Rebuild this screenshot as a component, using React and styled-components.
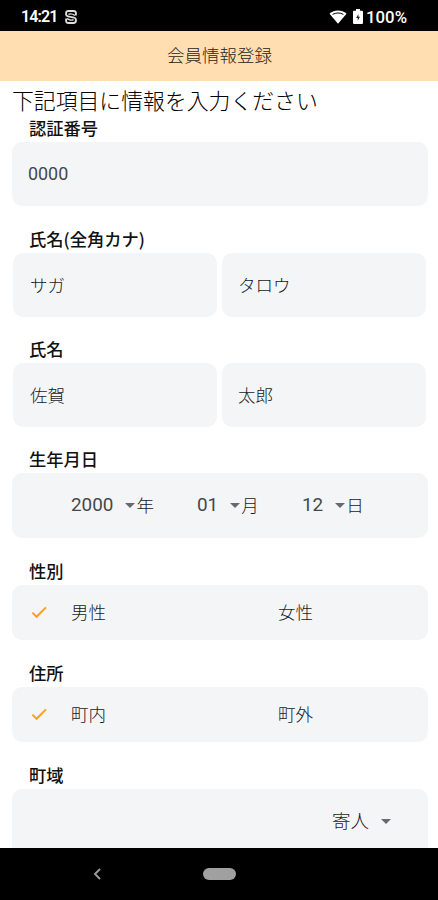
import React from "react";
import styled, { createGlobalStyle } from "styled-components";

const App = () => {
  return (
    <>
      <GlobalStyle />
      <StScreen>
        <StStatusBar>
          <StStatusGroup>
            <StClock>14:21</StClock>
            <AppMark />
          </StStatusGroup>
          <StStatusGroup>
            <WifiIcon />
            <BatteryIcon />
            <StPercent>100%</StPercent>
          </StStatusGroup>
        </StStatusBar>

        <StHeader>会員情報登録</StHeader>

        <StForm>
          <StLead>下記項目に情報を入力ください</StLead>

          <Field label="認証番号">
            <StBox $height={64}>
              <StNumber $size={17.9}>0000</StNumber>
            </StBox>
          </Field>

          <Field label="氏名(全角カナ)" gap={19}>
            <StPair>
              <StBox $height={64}>サガ</StBox>
              <StBox $height={64}>タロウ</StBox>
            </StPair>
          </Field>

          <Field label="氏名" gap={18}>
            <StPair>
              <StBox $height={64}>佐賀</StBox>
              <StBox $height={64}>太郎</StBox>
            </StPair>
          </Field>

          <Field label="生年月日" gap={18}>
            <StDateBox $height={65}>
              <DatePart value="2000" unit="年" width={126} />
              <DatePart value="01" unit="月" width={105} />
              <DatePart value="12" unit="日" width={80} />
            </StDateBox>
          </Field>

          <Field label="性別" gap={19}>
            <Choice options={["男性", "女性"]} />
          </Field>

          <Field label="住所" gap={19}>
            <Choice options={["町内", "町外"]} />
          </Field>

          <Field label="町域" gap={19}>
            <StTownBox $height={66}>
              寄人
              <Caret />
            </StTownBox>
          </Field>
        </StForm>

        <StNavBar>
          <StBack width="10" height="14" viewBox="0 0 10 14">
            <path d="M8 2 L3 7 L8 12" fill="none" stroke="#999" strokeWidth="2" />
          </StBack>
          <StHomePill />
        </StNavBar>
      </StScreen>
    </>
  );
};

export default App;

const Field = ({ label, gap = 0, children }) => (
  <StField $gap={gap}>
    <StLabel>{label}</StLabel>
    {children}
  </StField>
);

const DatePart = ({ value, unit, width }) => (
  <StDatePart $width={width}>
    <StNumber $size={18.9}>{value}</StNumber>
    <Caret />
    <span>{unit}</span>
  </StDatePart>
);

const Choice = ({ options }) => (
  <StChoiceBox $height={55}>
    <StOption>
      <StCheck width="16" height="13" viewBox="0 0 16 13">
        <path d="M1.4 6.6 L5.6 10.8 L15 1.4" fill="none" stroke="#ff9f1f" strokeWidth="2" />
      </StCheck>
      {options[0]}
    </StOption>
    <StOption>{options[1]}</StOption>
  </StChoiceBox>
);

const Caret = () => (
  <StCaret width="10" height="5" viewBox="0 0 10 5">
    <path d="M0 0 H10 L5 5 Z" fill="#666a6d" />
  </StCaret>
);

const AppMark = () => (
  <svg width="12" height="14" viewBox="0 0 12 14" fill="none" stroke="#dedede">
    <path
      d="M10.9 5.6 V3.2 Q10.9 1 8.5 1 H3.5 Q1.1 1 1.1 3.2 V4.6 Q1.1 6 3 6.4 L9 7.6 Q10.9 8 10.9 9.4 V10.8 Q10.9 13 8.5 13 H3.5 Q1.1 13 1.1 10.8 V8.4"
      strokeWidth="1.9"
    />
    <path d="M3.4 4.4 Q6 3 10 5.4 M2 8.6 Q6 11 8.6 9.6" strokeWidth="1.3" />
  </svg>
);

const WifiIcon = () => (
  <svg width="18" height="14" viewBox="0 0 18 14">
    <path d="M0.5 3.8 C5.5 -0.6 12.5 -0.6 17.5 3.8 L9 13.8 Z" fill="#fff" />
    <path d="M3.6 4.4 C7 2.5 11 2.5 14.4 4.4" fill="none" stroke="#000" strokeWidth="1" />
  </svg>
);

const BatteryIcon = () => (
  <svg width="10" height="15" viewBox="0 0 10 15">
    <path d="M3 0 H7 V1.7 H9 Q10 1.7 10 2.7 V14 Q10 15 9 15 H1 Q0 15 0 14 V2.7 Q0 1.7 1 1.7 H3 Z" fill="#fff" />
    <path d="M5.4 5 L3.1 9 H4.7 V11.8 L7 7.8 H5.4 Z" fill="#222" />
  </svg>
);

const GlobalStyle = createGlobalStyle`
  * {
    box-sizing: border-box;
  }

  body {
    margin: 0;
    background-color: #fff;
  }
`;

const StScreen = styled.div`
  width: 438px;
  height: 900px;
  display: flex;
  flex-direction: column;
  overflow: hidden;
  background-color: #fff;
  color: #18191a;
  font-family: "Noto Sans CJK JP", sans-serif;
  font-size: 17.5px;
  font-weight: 300;
`;

const StStatusBar = styled.div`
  height: 31px;
  flex-shrink: 0;
  display: flex;
  justify-content: space-between;
  align-items: center;
  padding: 2px 31px 0 21px;
  background-color: #000;
  color: #fff;
  font-family: Roboto, sans-serif;
  font-size: 16px;
  font-weight: 500;
`;

const StStatusGroup = styled.div`
  display: flex;
  align-items: center;
  gap: 6px;
`;

const StClock = styled.span`
  width: 38px;
  letter-spacing: -0.9px;
  font-weight: 600;
`;

const StPercent = styled.span`
  margin-left: -3px;
  font-size: 16.8px;
`;

const StHeader = styled.header`
  height: 50px;
  flex-shrink: 0;
  display: flex;
  justify-content: center;
  align-items: center;
  padding: 0 0 3px 1px;
  background-color: #ffdfb2;
  color: #2c2216;
  font-size: 17.5px;
`;

const StForm = styled.main`
  height: 767px;
  flex-shrink: 1;
  min-height: 0;
  overflow: hidden;
  padding: 5px 10px 0 12px;
`;

const StLead = styled.p`
  margin: 0 0 1px;
  height: 27px;
  line-height: 27px;
  font-size: 21.85px;
  color: #000;
`;

const StField = styled.section`
  margin-top: ${({ $gap }) => $gap}px;
`;

const StLabel = styled.div`
  height: 28px;
  line-height: 28px;
  padding-left: 17px;
  color: #111;
  font-size: 17.3px;
  font-weight: 500;
`;

const StBox = styled.div`
  height: ${({ $height }) => $height}px;
  display: flex;
  align-items: center;
  padding: 0 16px 2px;
  border-radius: 10px;
  background-color: #f3f5f7;
`;

const StPair = styled.div`
  display: grid;
  grid-template-columns: 1fr 1fr;
  gap: 5px;
  padding: 0 2px 0 1px;

  ${StBox}:first-child {
    padding-left: 17px;
  }
`;

const StDateBox = styled(StBox)`
  padding-left: 59px;
`;

const StDatePart = styled.div`
  width: ${({ $width }) => $width}px;
  display: flex;
  align-items: center;
`;

const StNumber = styled.span`
  color: #45484a;
  font-family: Roboto, "Noto Sans CJK JP", sans-serif;
  font-size: ${({ $size }) => $size}px;
  font-weight: 400;
`;

const StCaret = styled.svg`
  margin: 2px 1px 0 12px;
`;

const StCheck = styled.svg`
  margin-top: 2px;
`;

const StChoiceBox = styled(StBox)`
  display: grid;
  grid-template-columns: 247px 1fr;
  padding: 0 16px 2px 19px;
`;

const StOption = styled.div`
  display: flex;
  align-items: center;
  gap: 24px;
`;

const StTownBox = styled(StBox)`
  justify-content: flex-end;
  padding-right: 36px;
  padding-bottom: 4px;
  font-size: 18.5px;
`;

const StNavBar = styled.nav`
  height: 52px;
  flex-shrink: 0;
  display: flex;
  align-items: center;
  padding-left: 92px;
  background-color: #000;
`;

const StBack = styled.svg`
  margin-right: 101px;
`;

const StHomePill = styled.div`
  width: 33px;
  height: 12px;
  border-radius: 6px;
  background-color: #a0a0a0;
`;
